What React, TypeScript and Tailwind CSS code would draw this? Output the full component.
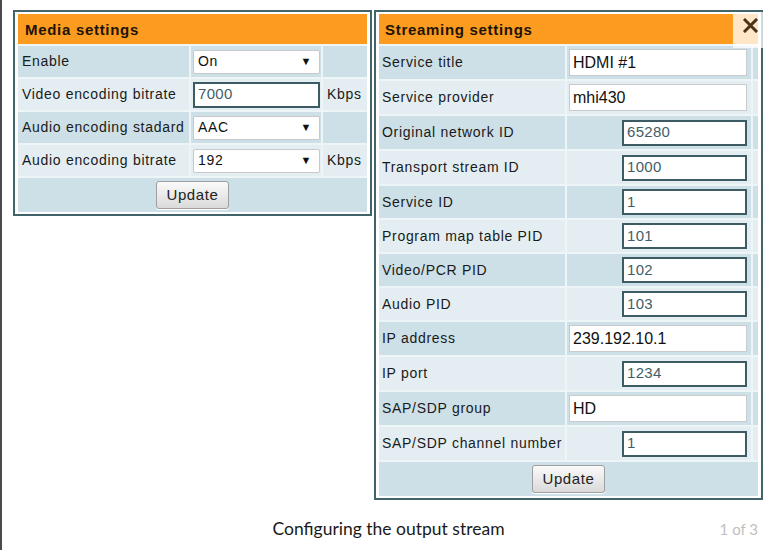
import React from "react";

const ORANGE = "bg-[#fb9b1f]";
const DARK = "bg-[#cde0e7]";
const LIGHT = "bg-[#e4eef2]";

function Select({ value }: { value: string }) {
  return (
    <div className="ml-[2px] w-[127px] h-[24px] bg-white border border-[#c9c9c9] rounded-[2px] flex items-center justify-between pl-[4px] pr-[7px] text-[14px] tracking-[0.7px] text-[#111]">
      <span>{value}</span>
      <span className="text-[11px] text-[#111]">▼</span>
    </div>
  );
}

function NumInput({ value, w }: { value: string; w: string }) {
  return (
    <div className={`${w} h-[26px] bg-white border-2 border-[#3d5b62] flex items-center pl-[3px] text-[15px] tracking-[0.3px] text-[#3f5e68]`}>
      {value}
    </div>
  );
}

function TextInput({ value }: { value: string }) {
  return (
    <div className="ml-[2px] w-[178px] h-[27px] bg-white border border-[#c8cbcc] flex items-center pl-[3px] text-[16px] text-[#111]">
      {value}
    </div>
  );
}

function UpdateButton() {
  return (
    <div className="h-[28px] px-[10px] flex items-center bg-gradient-to-b from-[#fafafa] to-[#dadada] border border-[#9f9f9f] rounded-[3px] text-[15px] tracking-[0.6px] text-[#222] shadow-[0_1px_0_#fff]">
      Update
    </div>
  );
}

type Row = { label: string; kind: "wide" | "num"; value: string; h: number };

const streamRows: Row[] = [
  { label: "Service title", kind: "wide", value: "HDMI #1", h: 33 },
  { label: "Service provider", kind: "wide", value: "mhi430", h: 33 },
  { label: "Original network ID", kind: "num", value: "65280", h: 33 },
  { label: "Transport stream ID", kind: "num", value: "1000", h: 33 },
  { label: "Service ID", kind: "num", value: "1", h: 32 },
  { label: "Program map table PID", kind: "num", value: "101", h: 32 },
  { label: "Video/PCR PID", kind: "num", value: "102", h: 32 },
  { label: "Audio PID", kind: "num", value: "103", h: 32 },
  { label: "IP address", kind: "wide", value: "239.192.10.1", h: 33 },
  { label: "IP port", kind: "num", value: "1234", h: 33 },
  { label: "SAP/SDP group", kind: "wide", value: "HD", h: 33 },
  { label: "SAP/SDP channel number", kind: "num", value: "1", h: 33 },
];

export default function App() {
  return (
    <div
      className="relative w-[769px] h-[550px] bg-white border-l-2 border-[#4a4a4a] overflow-hidden"
      style={{ fontFamily: '"Liberation Sans", Arial, sans-serif' }}
    >
      <div className="flex items-start gap-[2px] pl-[11px] pt-[10px]">
        {/* Media settings */}
        <div className="w-[359px] border-2 border-[#43636b] px-[3px] py-[2px] bg-white">
          <div className="grid grid-cols-[171px_130px_44px] gap-[2px] bg-[#eef5f7] text-[14px] tracking-[0.7px] text-[#1a1a1a]">
            <div className={`col-span-3 h-[30px] ${ORANGE} flex items-center pl-[7px] pt-[2px] font-bold text-[15px] tracking-[0.7px] text-[#1e1305]`}>
              Media settings
            </div>

            <div className={`${DARK} h-[31px] flex items-center pl-[4px]`}>Enable</div>
            <div className={`${DARK} flex items-center`}><Select value="On" /></div>
            <div className={DARK} />

            <div className={`${LIGHT} h-[31px] flex items-center pl-[4px]`}>Video encoding bitrate</div>
            <div className={`${LIGHT} flex items-center`}>
              <div className="ml-[2px]"><NumInput value="7000" w="w-[127px]" /></div>
            </div>
            <div className={`${LIGHT} flex items-center pl-[4px]`}>Kbps</div>

            <div className={`${DARK} h-[31px] flex items-center pl-[4px]`}>Audio encoding stadard</div>
            <div className={`${DARK} flex items-center`}><Select value="AAC" /></div>
            <div className={DARK} />

            <div className={`${LIGHT} h-[31px] flex items-center pl-[4px]`}>Audio encoding bitrate</div>
            <div className={`${LIGHT} flex items-center`}><Select value="192" /></div>
            <div className={`${LIGHT} flex items-center pl-[4px]`}>Kbps</div>

            <div className={`col-span-3 ${DARK} h-[34px] flex items-center justify-center`}>
              <UpdateButton />
            </div>
          </div>
        </div>

        {/* Streaming settings */}
        <div className="w-[389px] border-2 border-[#43636b] px-[3px] py-[2px] bg-white">
          <div className="grid grid-cols-[186px_184px_5px] gap-[2px] bg-[#eef5f7] text-[14px] tracking-[0.7px] text-[#1a1a1a]">
            <div className={`col-span-3 h-[30px] ${ORANGE} flex items-center pl-[6px] pt-[2px] font-bold text-[15px] tracking-[0.7px] text-[#1e1305]`}>
              Streaming settings
            </div>
            {streamRows.map((r, i) => {
              const bg = i % 2 === 0 ? DARK : LIGHT;
              return (
                <React.Fragment key={r.label}>
                  <div className={`${bg} flex items-center pl-[3px]`} style={{ height: r.h }}>
                    {r.label}
                  </div>
                  <div className={`${bg} flex items-center tracking-normal ${r.kind === "num" ? "justify-end pr-[4px]" : ""}`}>
                    {r.kind === "wide" ? (
                      <TextInput value={r.value} />
                    ) : (
                      <NumInput value={r.value} w="w-[125px]" />
                    )}
                  </div>
                  <div className={bg} />
                </React.Fragment>
              );
            })}
            <div className={`col-span-3 ${DARK} h-[34px] flex items-center justify-center`}>
              <UpdateButton />
            </div>
          </div>
        </div>
      </div>

      {/* Caption */}
      <div
        className="relative flex justify-center mt-[16px] pl-[6px]"
        style={{ fontFamily: 'Lato, "Open Sans", sans-serif' }}
      >
        <span className="text-[17.5px] text-[#1a1a1a]">Configuring the output stream</span>
        <span className="absolute right-[11px] top-[2px] text-[15px] text-[#c0c0c0]">1 of 3</span>
      </div>

      {/* Close button overlay */}
      <div className="absolute top-[12px] left-[731px] w-[32px] h-[36px] bg-white/75 flex items-start justify-center pt-[6px] pl-[2px]">
        <svg width="15" height="15" viewBox="0 0 15 15">
          <path d="M2 2 L13 13 M13 2 L2 13" stroke="#4a3418" strokeWidth="3" strokeLinecap="square" />
        </svg>
      </div>
    </div>
  );
}
